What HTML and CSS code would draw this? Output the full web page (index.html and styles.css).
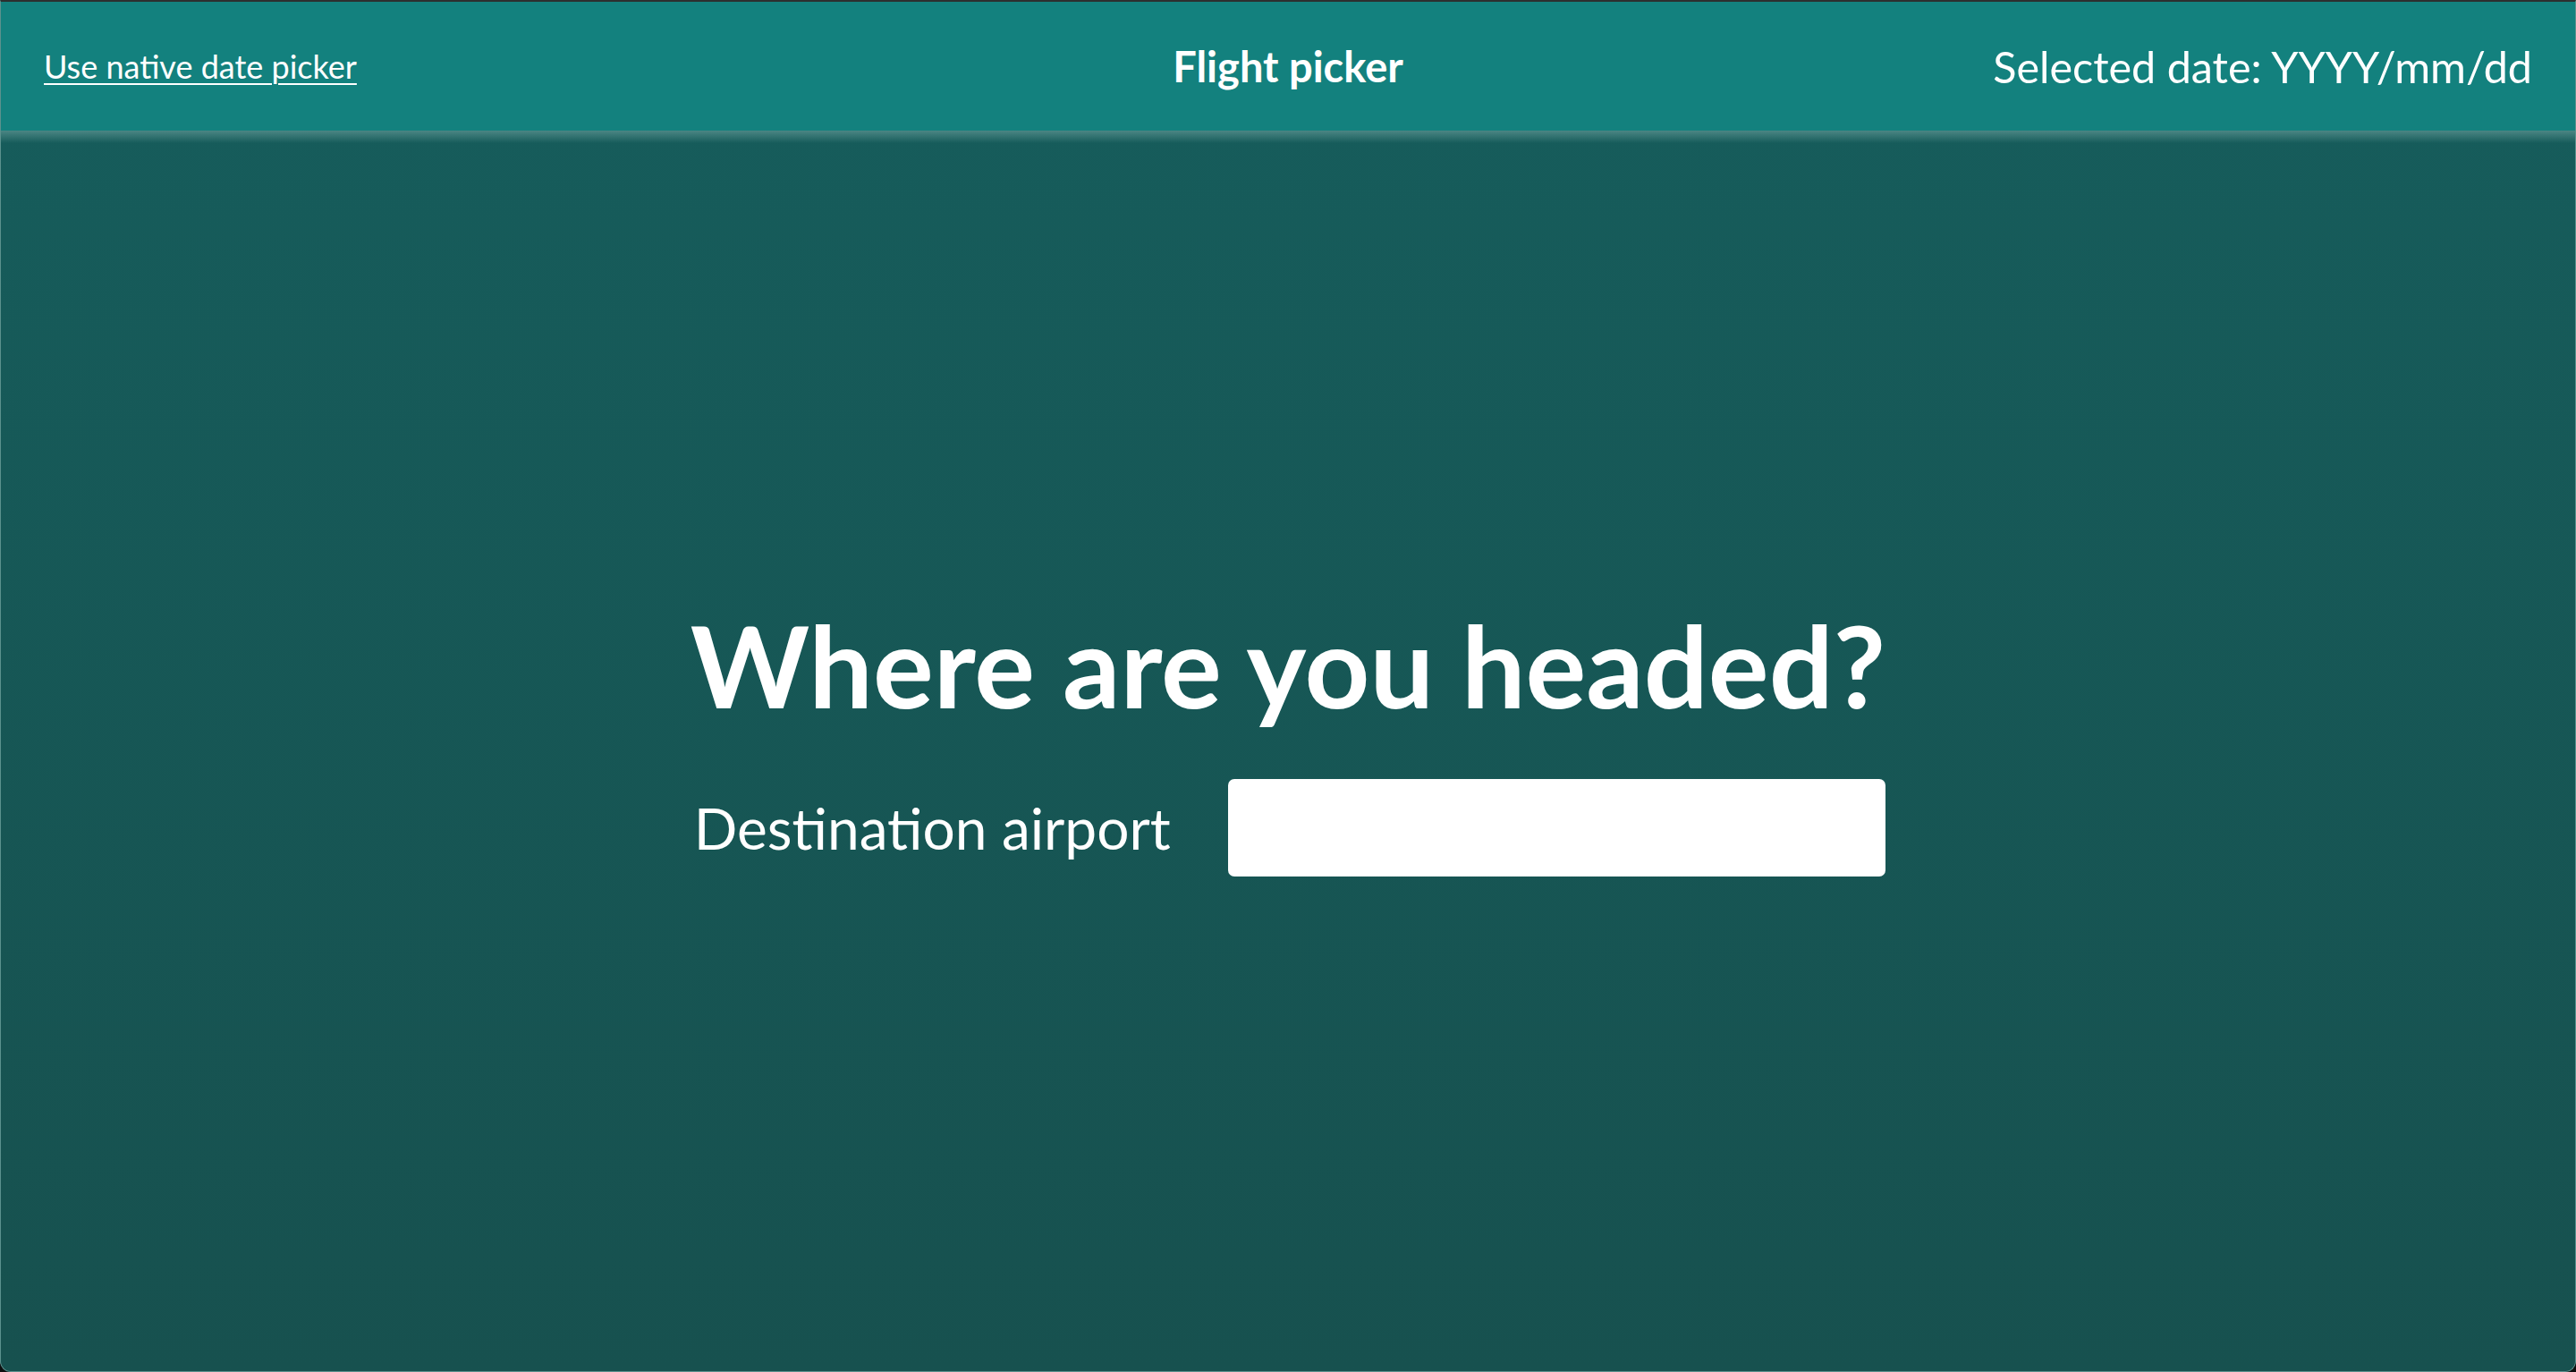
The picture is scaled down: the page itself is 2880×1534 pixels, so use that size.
FILE: index.html
```html
<!DOCTYPE html>
<html lang="en">
<head>
<meta charset="utf-8">
<title>Flight picker</title>
<link rel="stylesheet" href="styles.css">
</head>
<body>
<div class="window">
  <header class="topbar">
    <a class="native-link" href="#">Use native date picker</a>
    <h1 class="app-title">Flight picker</h1>
    <span class="selected-date">Selected date: YYYY/mm/dd</span>
  </header>
  <main class="stage">
    <div class="search">
      <h2 class="headline">Where are you headed?</h2>
      <label class="field">
        <span class="field-label">Destination airport</span>
        <input class="field-input" type="text">
      </label>
    </div>
  </main>
</div>
</body>
</html>
```
FILE: styles.css
```css
html, body {
  margin: 0;
  padding: 0;
  background: #0d0f0f;
}
body {
  font-family: Lato, "Noto Sans", sans-serif;
  color: #ffffff;
}
.window {
  box-sizing: border-box;
  height: 1534px;
  display: flex;
  flex-direction: column;
  border-top: 2px solid #2c2f2f;
  border-left: 1px solid #5b918d;
  border-right: 1px solid #5b918d;
  border-bottom: 1px solid #5b918d;
  border-radius: 0 0 12px 12px;
  overflow: hidden;
  background: linear-gradient(#165d5c, #17514f);
}
.topbar {
  flex: 0 0 auto;
  height: 144px;
  box-sizing: border-box;
  padding: 0 48px;
  display: grid;
  grid-template-columns: 1fr auto 1fr;
  align-items: center;
  background: #13817e;
  position: relative;
}
.topbar::after {
  content: "";
  position: absolute;
  left: 0;
  right: 0;
  top: 100%;
  height: 14px;
  background: linear-gradient(#4b8684, rgba(22, 93, 92, 0));
}
.native-link {
  justify-self: start;
  color: #ffffff;
  font-size: 36px;
  text-decoration: underline;
  text-decoration-thickness: 2px;
  text-underline-offset: 5px;
}
.app-title {
  margin: 0;
  font-size: 47px;
  font-weight: 700;
}
.selected-date {
  justify-self: end;
  font-size: 48.5px;
}
.stage {
  flex: 1 1 auto;
  display: flex;
  align-items: center;
  justify-content: center;
  padding-bottom: 32px;
}
.search {
  display: flex;
  flex-direction: column;
  align-items: flex-start;
}
.headline {
  margin: 0 0 51px 0;
  font-size: 127px;
  font-weight: 700;
  line-height: 1.2;
}
.field {
  display: flex;
  align-items: center;
  gap: 64px;
  padding-left: 4px;
}
.field-label {
  font-size: 64px;
}
.field-input {
  width: 735px;
  height: 109px;
  box-sizing: border-box;
  border: none;
  border-radius: 7px;
  background: #ffffff;
  font-family: Lato, sans-serif;
  font-size: 48px;
  padding: 0 24px;
}
```
